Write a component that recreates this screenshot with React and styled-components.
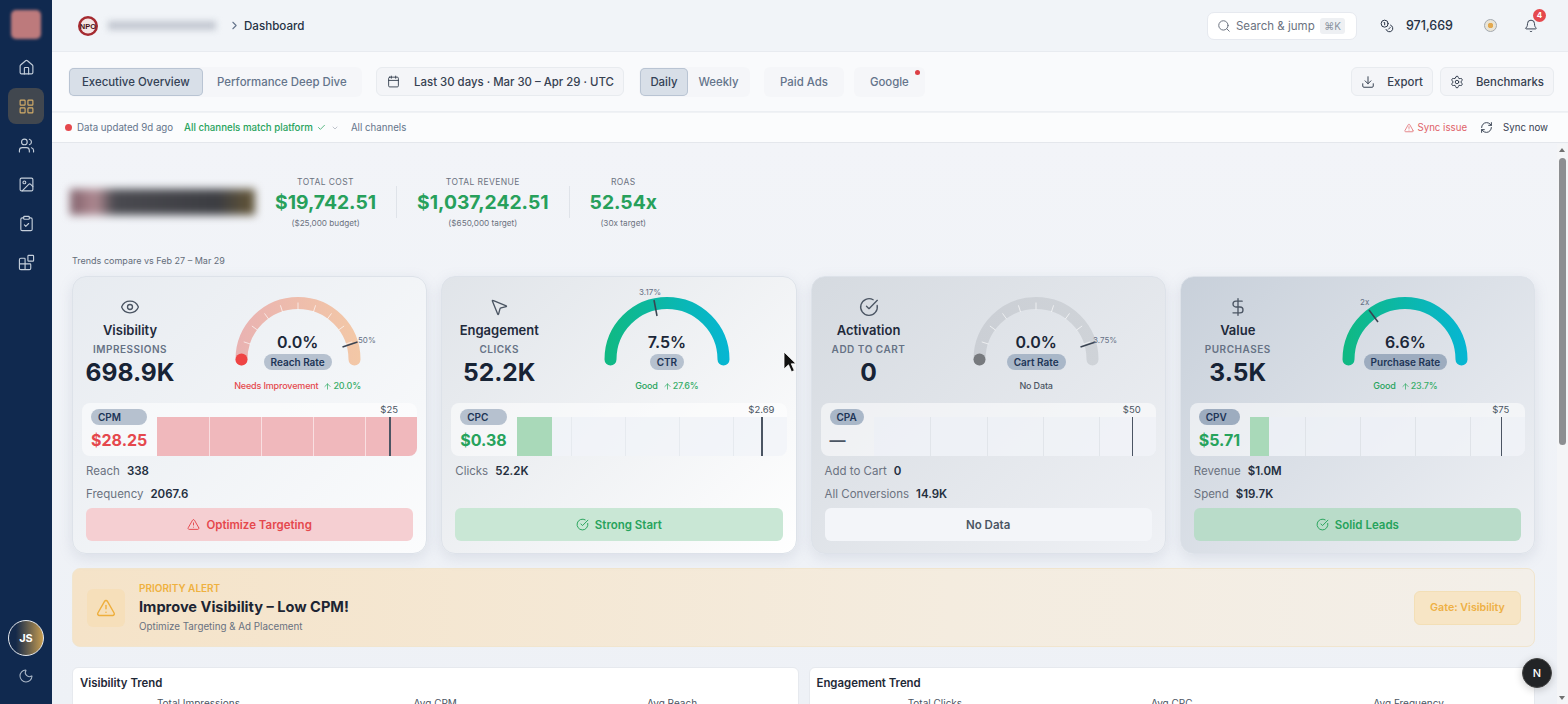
import React from 'react';
import styled, { createGlobalStyle } from 'styled-components';
import {
  House, LayoutGrid, Users, Image, ClipboardCheck, Blocks, Moon, ChevronRight, Search, Coins, Bell,
  Calendar, Download, Settings, TriangleAlert, RefreshCw, Check, ChevronDown, Eye, MousePointer2,
  CircleCheckBig, DollarSign, ArrowUp,
} from 'lucide-react';

const GlobalStyle = createGlobalStyle`
  * { box-sizing: border-box; }
  html, body { margin: 0; height: 100%; overflow: hidden; }
  body { font-family: Inter, "Liberation Sans", sans-serif; color: #1f2937; background: #f1f4f8; }
`;

const Shell = styled.div`
  display: grid;
  grid-template-columns: 52px 1fr;
  height: 100vh;
  overflow: hidden;
  position: relative;
`;

const Sidebar = styled.nav`
  background: #10294f;
  display: flex;
  flex-direction: column;
  align-items: center;
  padding-top: 10px;
  padding-bottom: 18px;
`;

const SideLogo = styled.div`
  width: 30px;
  height: 29px;
  border-radius: 5px;
  background: #bd7a7c;
  filter: blur(1.5px);
  margin-bottom: 10px;
`;

const SideItem = styled.div`
  width: 36px;
  height: 36px;
  margin-bottom: 3px;
  border-radius: 8px;
  display: flex;
  align-items: center;
  justify-content: center;
  color: ${(p) => (p.$active ? '#d4ad68' : '#c5cfdb')};
  background: ${(p) => (p.$active ? '#41474f' : 'transparent')};
`;

const SideSpacer = styled.div`
  flex: 1;
`;

const UserAvatar = styled.div`
  width: 36px;
  height: 36px;
  border-radius: 50%;
  border: 1.5px solid #e6e9ee;
  background: linear-gradient(90deg, #14294a 20%, #c69c50 100%);
  color: #fff;
  font-size: 11px;
  font-weight: 700;
  display: flex;
  align-items: center;
  justify-content: center;
  margin-bottom: 10px;
`;

const MoonButton = styled.div`
  height: 20px;
  color: #aab6c6;
  display: flex;
  align-items: center;
`;

const Main = styled.div`
  display: flex;
  flex-direction: column;
  min-width: 0;
  height: 100vh;
`;

const TopBar = styled.header`
  height: 52px;
  flex-shrink: 0;
  display: flex;
  align-items: center;
  padding: 0 30px 0 26px;
  background: #f1f4f8;
  border-bottom: 1px solid #e8ebf0;
`;

const Crumbs = styled.div`
  display: flex;
  align-items: center;
  color: #64748b;
  flex: 1;
`;

const BrandMark = styled.svg`
  width: 20px;
  height: 20px;
  margin-right: 10px;
`;

const BrandText = styled.text`
  font-family: "Liberation Sans", sans-serif;
  font-size: 7.5px;
  font-weight: 700;
  fill: #4a1216;
`;

const BlurName = styled.div`
  width: 108px;
  height: 9px;
  background: #c3c8d1;
  filter: blur(3px);
  margin-right: 12px;
`;

const CrumbText = styled.span`
  font-size: 11.6px;
  font-weight: 500;
  margin-left: 3px;
  color: #263244;
`;

const SearchBox = styled.div`
  width: 150px;
  height: 28px;
  background: #fff;
  border: 1px solid #e6e9ef;
  border-radius: 7px;
  display: flex;
  align-items: center;
  padding: 0 11px 0 9px;
  color: #6b7280;
  font-size: 11.5px;
  gap: 5px;
  white-space: nowrap;
`;

const Kbd = styled.span`
  margin-left: auto;
  background: #eef0f3;
  border-radius: 3px;
  color: #8a93a0;
  font-size: 10px;
  padding: 2px 4px;
  white-space: nowrap;
`;

const Credits = styled.div`
  display: flex;
  align-items: center;
  margin-left: 23px;
  gap: 12px;
  font-size: 12.5px;
  font-weight: 500;
  color: #263244;
`;

const StatusRing = styled.div`
  width: 13px;
  height: 13px;
  margin-left: 31px;
  border-radius: 50%;
  border: 1.5px solid #a3a8ae;
  background: radial-gradient(circle, #e3a94f 0 2.5px, #e9e4d6 3px);
`;

const BellWrap = styled.div`
  position: relative;
  margin-left: 27px;
  display: flex;
  color: #374151;
`;

const BellBadge = styled.span`
  position: absolute;
  top: -10px;
  right: -8px;
  width: 13px;
  height: 13px;
  border-radius: 50%;
  background: #e5484d;
  color: #fff;
  font-size: 8px;
  font-weight: 700;
  display: flex;
  align-items: center;
  justify-content: center;
`;

const Toolbar = styled.div`
  height: 60px;
  flex-shrink: 0;
  display: flex;
  align-items: center;
  padding: 0 14px 0 16px;
  background: #f9fafc;
  border-bottom: 1px solid #eceff3;
`;

const Group = styled.div`
  display: flex;
  align-items: center;
  height: 30px;
  padding: 1px;
  border-radius: 6px;
  background: #f5f6f9;
  margin-left: ${(p) => p.$ml || 0}px;
`;

const Tab = styled.div`
  height: 28px;
  display: flex;
  align-items: center;
  padding: 0 ${(p) => p.$pad || 15}px;
  border-radius: 5px;
  font-size: 11.4px;
  font-weight: 500;
  white-space: nowrap;
  position: relative;
  color: ${(p) => (p.$active ? '#334155' : '#64748b')};
  background: ${(p) => (p.$active ? '#d8dfe8' : 'transparent')};
  box-shadow: ${(p) => (p.$active ? 'inset 0 0 0 1px #b9c4d3' : 'none')};
`;

const NotifyDot = styled.span`
  position: absolute;
  top: 2px;
  right: 4px;
  width: 5px;
  height: 5px;
  border-radius: 50%;
  background: #dc3f45;
`;

const Boxed = styled.div`
  height: 29px;
  display: flex;
  align-items: center;
  gap: ${(p) => p.$gap || 12}px;
  padding: 0 9px 0 ${(p) => p.$pl || 9}px;
  border-radius: 6px;
  border: 1px solid #e8ebef;
  background: #f4f5f8;
  font-size: 11.4px;
  font-weight: 500;
  color: #374151;
  white-space: nowrap;
  margin-left: ${(p) => p.$ml || 0}px;
`;

const ToolSpacer = styled.div`
  flex: 1;
`;

const StatusBar = styled.div`
  height: 31px;
  flex-shrink: 0;
  display: flex;
  align-items: center;
  padding: 0 20px 0 13px;
  background: #fbfcfd;
  border-top: 1px solid #f0f2f5;
  border-bottom: 1px solid #e4e7ec;
  font-size: 9.7px;
  color: #64748b;
  white-space: nowrap;
`;

const RedDot = styled.span`
  width: 7px;
  height: 7px;
  border-radius: 50%;
  background: #e5484d;
  margin-right: 5px;
`;

const GreenNote = styled.span`
  color: #27a35c;
  font-weight: 500;
  margin-left: 11px;
  display: flex;
  align-items: center;
  gap: 4px;
`;

const Muted = styled.span`
  display: flex;
  margin-left: ${(p) => p.$ml || 0}px;
  color: #a0a8b3;
`;

const ChannelLabel = styled.span`
  margin-left: 12px;
`;

const SyncIssue = styled.span`
  margin-left: auto;
  display: flex;
  align-items: center;
  gap: 3px;
  color: #df6268;
`;

const SyncNow = styled.span`
  margin-left: 13px;
  display: flex;
  align-items: center;
  gap: 10px;
  color: #374151;
`;

const Content = styled.main`
  flex: 1;
  min-height: 0;
  overflow: hidden;
  padding: 31px 33px 0 20px;
  background: linear-gradient(180deg, #f2f4f8, #eef1f6);
`;

const Summary = styled.section`
  display: flex;
  align-items: center;
  height: 56px;
`;

const BlurLogo = styled.div`
  width: 185px;
  height: 26px;
  margin-left: -2px;
  margin-right: 20px;
  background: linear-gradient(90deg, #80606a 0, #b08a92 14%, #4a4a50 24%, #3c3d42 80%, #5e5238 96%);
  filter: blur(4px);
`;

const Kpi = styled.div`
  display: flex;
  flex-direction: column;
  align-items: center;
`;

const KpiLabel = styled.div`
  font-size: 8.5px;
  letter-spacing: 0.4px;
  color: #6b7280;
  line-height: 12px;
`;

const KpiValue = styled.div`
  font-size: 19.3px;
  font-weight: 700;
  line-height: 29px;
  color: #27a05b;
  white-space: nowrap;
`;

const KpiNote = styled.div`
  font-size: 8.2px;
  color: #6b7280;
  line-height: 12px;
`;

const KpiRule = styled.div`
  width: 1px;
  height: 32px;
  background: #dfe3e9;
  margin: 0 20px;
`;

const CompareNote = styled.div`
  font-size: 9px;
  color: #646d7a;
  line-height: 12px;
  margin-top: 25px;
`;

const Cards = styled.section`
  display: grid;
  grid-template-columns: repeat(4, 1fr);
  gap: 14px;
  margin-top: 9px;
`;

const Card = styled.article`
  height: 278px;
  padding: 20px 13px 12px;
  border: 1px solid #dde2e9;
  border-radius: 14px;
  background: linear-gradient(135deg, ${(p) => p.$from}, ${(p) => p.$to});
  box-shadow: 0 4px 14px rgba(120, 135, 160, 0.18);
  display: flex;
  flex-direction: column;
`;

const CardTop = styled.div`
  display: flex;
  height: 96px;
  gap: 8px;
`;

const Lead = styled.div`
  width: 88px;
  flex-shrink: 0;
  display: flex;
  flex-direction: column;
  align-items: center;
  white-space: nowrap;
  color: #4b5563;
`;

const LeadTitle = styled.div`
  font-size: 13px;
  font-weight: 600;
  line-height: 18px;
  margin-top: 4px;
  color: #1f2a3b;
`;

const LeadSub = styled.div`
  font-size: 10px;
  font-weight: 600;
  letter-spacing: 0.5px;
  line-height: 13px;
  margin-top: 4px;
  color: #667285;
`;

const LeadValue = styled.div`
  font-size: 24.6px;
  font-weight: 700;
  line-height: 28px;
  margin-top: 2px;
  color: #172335;
`;

const GaugeArea = styled.div`
  flex: 1;
  display: flex;
  justify-content: center;
`;

const GaugeBox = styled.div`
  position: relative;
  width: 150px;
  padding-top: 35px;
  display: flex;
  flex-direction: column;
  align-items: center;
  white-space: nowrap;
`;

const GaugeSvg = styled.svg`
  position: absolute;
  top: 0;
  left: 0;
  overflow: visible;
`;

const GaugeLabel = styled.text`
  font-family: Inter, "Liberation Sans", sans-serif;
  font-size: 8px;
  fill: #667085;
`;

const GaugeValue = styled.div`
  position: relative;
  font-size: 16px;
  font-weight: 600;
  line-height: 20px;
  color: #1b2738;
`;

const Pill = styled.span`
  display: inline-block;
  height: 16px;
  line-height: 16px;
  padding: 0 7px;
  border-radius: 8px;
  background: ${(p) => p.$bg || '#b6c1cf'};
  color: #1d3557;
  font-size: 10px;
  font-weight: 600;
  white-space: nowrap;
  text-align: center;
`;

const GaugePill = styled(Pill)`
  position: relative;
  margin-top: 2px;
`;

const MetricPill = styled(Pill)`
  text-align: left;
`;

const GaugeStatus = styled.div`
  margin-top: 10px;
  height: 12px;
  line-height: 12px;
  font-size: 9px;
  font-weight: 500;
  letter-spacing: -0.15px;
  color: ${(p) => p.$color};
  display: flex;
  align-items: center;
  gap: 5px;
`;

const Delta = styled.span`
  display: flex;
  align-items: center;
  gap: 1px;
  color: #36ad68;
  font-size: 9px;
  font-weight: 500;
`;

const MetricBar = styled.div`
  height: 53px;
  margin: 10px -4px 0 -4px;
  border-radius: 8px;
  background: rgba(255, 255, 255, 0.55);
  display: flex;
  position: relative;
`;

const MetricLead = styled.div`
  padding: 6px 10px 0 9px;
  display: flex;
  flex-direction: column;
  align-items: stretch;
  white-space: nowrap;
`;

const MetricValue = styled.div`
  font-size: 16px;
  font-weight: 700;
  line-height: 20px;
  margin-top: 5px;
  color: ${(p) => p.$color};
`;

const Track = styled.div`
  flex: 1;
  position: relative;
  margin-top: 14px;
  background: rgba(235, 239, 245, 0.55);
  border-radius: 0 0 8px 0;
`;

const TrackFill = styled.div`
  position: absolute;
  top: 0;
  bottom: 0;
  left: 0;
  background: ${(p) => p.$color};
  border-radius: 0 0 ${(p) => (p.$full ? 8 : 0)}px 0;
`;

const TrackDivider = styled.div`
  position: absolute;
  top: 0;
  bottom: 0;
  width: 1px;
  background: ${(p) => p.$line};
`;

const TargetLine = styled.div`
  position: absolute;
  top: 0;
  bottom: 0;
  width: 1.5px;
  background: #4b5563;
`;

const TargetLabel = styled.span`
  position: absolute;
  top: -13px;
  transform: translateX(-50%);
  font-size: 9.5px;
  line-height: 12px;
  color: #4b5563;
`;

const Stats = styled.div`
  height: 46px;
  margin-top: 3px;
  font-size: 11.5px;
`;

const StatRow = styled.div`
  height: 23px;
  display: flex;
  align-items: center;
  gap: 7px;
  color: #6b7280;
`;

const StatValue = styled.b`
  font-weight: 600;
  color: #242f40;
`;

const CardAction = styled.div`
  height: 33px;
  margin-top: 3px;
  border-radius: 6px;
  background: ${(p) => p.$bg};
  color: ${(p) => p.$color};
  font-size: 11.5px;
  font-weight: 600;
  display: flex;
  align-items: center;
  justify-content: center;
  gap: 6px;
`;

const Alert = styled.section`
  height: 79px;
  margin-top: 14px;
  padding: 0 13px 0 14px;
  border: 1px solid #f1e5ce;
  border-radius: 8px;
  background: linear-gradient(90deg, #f5e3c8, #f4ecdf 60%, #f3efe9);
  display: flex;
  align-items: center;
`;

const AlertIcon = styled.div`
  width: 38px;
  height: 38px;
  border-radius: 6px;
  background: #f6dfba;
  color: #eeae3c;
  display: flex;
  align-items: center;
  justify-content: center;
  margin-right: 14px;
`;

const AlertBody = styled.div`
  flex: 1;
`;

const AlertKicker = styled.div`
  font-size: 10px;
  font-weight: 600;
  line-height: 12px;
  color: #efb13f;
`;

const AlertTitle = styled.div`
  font-size: 14.6px;
  font-weight: 700;
  line-height: 20px;
  margin-top: 3px;
  color: #1d2533;
`;

const AlertNote = styled.div`
  font-size: 9.8px;
  line-height: 12px;
  margin-top: 4px;
  color: #697180;
`;

const GateBadge = styled.div`
  width: 107px;
  height: 34px;
  border: 1px solid #f3dfb6;
  border-radius: 6px;
  background: #f7e5c5;
  color: #eeb044;
  font-size: 10.7px;
  font-weight: 600;
  display: flex;
  align-items: center;
  justify-content: center;
`;

const Trends = styled.section`
  display: grid;
  grid-template-columns: 1fr 1fr;
  gap: 10px;
  margin-top: 20px;
`;

const TrendPanel = styled.div`
  height: 200px;
  background: #fff;
  border: 1px solid #e6e9ee;
  border-radius: 6px;
  padding: 7px 7px;
`;

const TrendTitle = styled.div`
  font-size: 11.4px;
  font-weight: 600;
  line-height: 16px;
  color: #1f2937;
`;

const TrendLegend = styled.div`
  display: grid;
  grid-template-columns: repeat(3, 1fr);
  margin-top: 6px;
  font-size: 10px;
  text-align: center;
  color: #4b5563;
`;

const ScrollTrack = styled.div`
  position: absolute;
  top: 144px;
  right: 0;
  bottom: 0;
  width: 11px;
  background: #f4f5f7;
`;

const ScrollThumb = styled.div`
  position: absolute;
  top: 14px;
  left: 2px;
  width: 7px;
  height: 287px;
  border-radius: 4px;
  background: #8c8e91;
`;

const ScrollArrow = styled.div`
  position: absolute;
  left: 2px;
  width: 0;
  height: 0;
  border-left: 3.5px solid transparent;
  border-right: 3.5px solid transparent;
  ${(p) => (p.$down ? 'bottom: 4px; border-top: 4px solid #707070;' : 'top: 4px; border-bottom: 4px solid #707070;')}
`;

const DevBadge = styled.div`
  position: absolute;
  left: 1522px;
  top: 658px;
  width: 30px;
  height: 30px;
  border-radius: 50%;
  background: #222426;
  border: 1px solid #444;
  color: #fff;
  font-size: 11px;
  font-weight: 500;
  display: flex;
  align-items: center;
  justify-content: center;
  box-shadow: 0 2px 8px rgba(0, 0, 0, 0.2);
`;

const Pointer = styled.svg`
  position: absolute;
  left: 783px;
  top: 351px;
`;

const cards = [
  {
    icon: Eye, title: 'Visibility', sub: 'Impressions', value: '698.9K', from: '#e7ebf0', to: '#fbfcfd',
    gauge: { from: '#e9b2b2', to: '#f3c8a6', dot: '#ef4444', segmented: true, tick: [119.5, 50, 134.5, 45], label: '50%', lx: 135, ly: 46 },
    rate: '0.0%', rateName: 'Reach Rate', status: 'Needs Improvement', statusColor: '#e5484d', delta: '20.0%',
    metric: 'CPM', amount: '$28.25', amountColor: '#e5484d', fill: 100, fillColor: '#f0b8bc', line: '#f9dfe1', target: 89.2, targetLabel: '$25',
    stats: [['Reach', '338'], ['Frequency', '2067.6']],
    action: 'Optimize Targeting', actionIcon: TriangleAlert, actionBg: '#f5cfd2', actionColor: '#e5484d',
  },
  {
    icon: MousePointer2, title: 'Engagement', sub: 'Clicks', value: '52.2K', from: '#e0e4e9', to: '#ffffff',
    gauge: { from: '#10b981', to: '#06b6d4', tick: [62, 3, 65, 19], label: '3.17%', lx: 47, ly: -2 },
    rate: '7.5%', rateName: 'CTR', status: 'Good', statusColor: '#27a35c', delta: '27.6%',
    metric: 'CPC', amount: '$0.38', amountColor: '#27a35c', fill: 13, fillColor: '#a9d9b9', line: '#e6eaef', target: 90.7, targetLabel: '$2.69',
    stats: [['Clicks', '52.2K']],
    action: 'Strong Start', actionIcon: CircleCheckBig, actionBg: '#c9e7d5', actionColor: '#27a35c',
  },
  {
    icon: CircleCheckBig, title: 'Activation', sub: 'Add to Cart', value: '0', from: '#d5dae0', to: '#eff1f5',
    gauge: { from: '#cbcfd5', to: '#cfd3d8', dot: '#777a7e', segmented: true, tick: [119.5, 50, 134.5, 45], label: '3.75%', lx: 132, ly: 46 },
    rate: '0.0%', rateName: 'Cart Rate', pillBg: '#a9b7c8', status: 'No Data', statusColor: '#4b5563',
    metric: 'CPA', amount: '—', amountColor: '#4b5563', fill: 0, fillColor: 'transparent', line: '#e1e5ea', target: 91.5, targetLabel: '$50',
    stats: [['Add to Cart', '0'], ['All Conversions', '14.9K']],
    action: 'No Data', actionBg: '#f3f5f9', actionColor: '#4b5563',
  },
  {
    icon: DollarSign, title: 'Value', sub: 'Purchases', value: '3.5K', from: '#c8d0da', to: '#eff1f5',
    gauge: { from: '#10b981', to: '#06b6d4', tick: [39, 13, 48, 25], label: '2x', lx: 30, ly: 8 },
    rate: '6.6%', rateName: 'Purchase Rate', pillBg: '#9dacbf', status: 'Good', statusColor: '#27a35c', delta: '23.7%',
    metric: 'CPV', amount: '$5.71', amountColor: '#27a35c', fill: 7, fillColor: '#a9d9b9', line: '#dfe3e8', target: 91.2, targetLabel: '$75',
    stats: [['Revenue', '$1.0M'], ['Spend', '$19.7K']],
    action: 'Solid Leads', actionIcon: CircleCheckBig, actionBg: '#b9dcc9', actionColor: '#27a35c',
  },
];

const Gauge = ({ id, gauge }) => {
  const ticks = [];
  if (gauge.segmented) {
    for (let a = 18; a < 180; a += 18) {
      const rad = (a * Math.PI) / 180;
      ticks.push(
        <line
          key={a}
          x1={75 - 50 * Math.cos(rad)}
          y1={62.5 - 50 * Math.sin(rad)}
          x2={75 - 57 * Math.cos(rad)}
          y2={62.5 - 57 * Math.sin(rad)}
          stroke="#ffffff"
          strokeOpacity="0.65"
          strokeWidth="1"
        />
      );
    }
  }
  return (
    <GaugeSvg width="150" height="96" viewBox="0 0 150 96">
      <defs>
        <linearGradient id={id} gradientUnits="userSpaceOnUse" x1="12" y1="0" x2="138" y2="0">
          <stop offset="0" stopColor={gauge.from} />
          <stop offset="1" stopColor={gauge.to} />
        </linearGradient>
      </defs>
      <path d="M18.5 62.5 A56.5 56.5 0 0 1 131.5 62.5" fill="none" stroke={`url(#${id})`} strokeWidth="12" strokeLinecap="round" />
      {ticks}
      {gauge.dot && <circle cx="18.5" cy="62.5" r="6" fill={gauge.dot} />}
      <line x1={gauge.tick[0]} y1={gauge.tick[1]} x2={gauge.tick[2]} y2={gauge.tick[3]} stroke="#3a4452" strokeWidth="1.5" />
      <GaugeLabel x={gauge.lx} y={gauge.ly}>{gauge.label}</GaugeLabel>
    </GaugeSvg>
  );
};

const KpiCard = ({ card, index }) => {
  const LeadIcon = card.icon;
  const ActionIcon = card.actionIcon;
  return (
    <Card $from={card.from} $to={card.to}>
      <CardTop>
        <Lead>
          <LeadIcon size={20} strokeWidth={1.6} />
          <LeadTitle>{card.title}</LeadTitle>
          <LeadSub>{card.sub.toUpperCase()}</LeadSub>
          <LeadValue>{card.value}</LeadValue>
        </Lead>
        <GaugeArea>
          <GaugeBox>
            <Gauge id={`gauge-${index}`} gauge={card.gauge} />
            <GaugeValue>{card.rate}</GaugeValue>
            <GaugePill $bg={card.pillBg}>{card.rateName}</GaugePill>
            <GaugeStatus $color={card.statusColor}>
              {card.status}
              {card.delta && (
                <Delta>
                  <ArrowUp size={9} />
                  {card.delta}
                </Delta>
              )}
            </GaugeStatus>
          </GaugeBox>
        </GaugeArea>
      </CardTop>
      <MetricBar>
        <MetricLead>
          <MetricPill $bg={card.pillBg}>{card.metric}</MetricPill>
          <MetricValue $color={card.amountColor}>{card.amount}</MetricValue>
        </MetricLead>
        <Track>
          <TrackFill $color={card.fillColor} $full={card.fill === 100} style={{ width: `${card.fill}%` }} />
          {[20, 40, 60, 80].map((p) => (
            <TrackDivider key={p} $line={card.line} style={{ left: `${p}%` }} />
          ))}
          <TargetLine style={{ left: `${card.target}%` }} />
          <TargetLabel style={{ left: `${card.target}%` }}>{card.targetLabel}</TargetLabel>
        </Track>
      </MetricBar>
      <Stats>
        {card.stats.map(([name, val]) => (
          <StatRow key={name}>
            {name}
            <StatValue>{val}</StatValue>
          </StatRow>
        ))}
      </Stats>
      <CardAction $bg={card.actionBg} $color={card.actionColor}>
        {ActionIcon && <ActionIcon size={13} strokeWidth={1.8} />}
        {card.action}
      </CardAction>
    </Card>
  );
};

export default function App() {
  return (
    <>
      <GlobalStyle />
      <Shell>
        <Sidebar>
          <SideLogo />
          <SideItem><House size={17} strokeWidth={1.6} /></SideItem>
          <SideItem $active><LayoutGrid size={17} strokeWidth={1.6} /></SideItem>
          <SideItem><Users size={17} strokeWidth={1.6} /></SideItem>
          <SideItem><Image size={17} strokeWidth={1.6} /></SideItem>
          <SideItem><ClipboardCheck size={17} strokeWidth={1.6} /></SideItem>
          <SideItem><Blocks size={17} strokeWidth={1.6} /></SideItem>
          <SideSpacer />
          <UserAvatar>JS</UserAvatar>
          <MoonButton><Moon size={16} strokeWidth={1.6} /></MoonButton>
        </Sidebar>
        <Main>
          <TopBar>
            <Crumbs>
              <BrandMark viewBox="0 0 20 20">
                <circle cx="10" cy="10" r="10" fill="#a52a30" />
                <circle cx="10" cy="10" r="7.5" fill="#f4e6e6" />
                <BrandText x="10" y="12.6" textAnchor="middle">NPO</BrandText>
              </BrandMark>
              <BlurName />
              <ChevronRight size={13} />
              <CrumbText>Dashboard</CrumbText>
            </Crumbs>
            <SearchBox>
              <Search size={14} strokeWidth={1.7} />
              Search &amp; jump
              <Kbd>⌘K</Kbd>
            </SearchBox>
            <Credits>
              <Coins size={14} strokeWidth={1.7} />
              971,669
            </Credits>
            <StatusRing />
            <BellWrap>
              <Bell size={14} strokeWidth={1.7} />
              <BellBadge>4</BellBadge>
            </BellWrap>
          </TopBar>
          <Toolbar>
            <Group>
              <Tab $active $pad={13}>Executive Overview</Tab>
              <Tab $pad={14.5}>Performance Deep Dive</Tab>
            </Group>
            <Boxed $ml={14} $gap={14} $pl={10}>
              <Calendar size={13} strokeWidth={1.7} />
              Last 30 days · Mar 30 – Apr 29 · UTC
            </Boxed>
            <Group $ml={15}>
              <Tab $active $pad={10.5}>Daily</Tab>
              <Tab $pad={10.5}>Weekly</Tab>
            </Group>
            <Group $ml={14}>
              <Tab>Paid Ads</Tab>
            </Group>
            <Group $ml={10}>
              <Tab>
                Google
                <NotifyDot />
              </Tab>
            </Group>
            <ToolSpacer />
            <Boxed>
              <Download size={14} strokeWidth={1.7} />
              Export
            </Boxed>
            <Boxed $ml={7}>
              <Settings size={14} strokeWidth={1.7} />
              Benchmarks
            </Boxed>
          </Toolbar>
          <StatusBar>
            <RedDot />
            Data updated 9d ago
            <GreenNote>
              All channels match platform
              <Check size={9} strokeWidth={2} />
            </GreenNote>
            <Muted $ml={5}><ChevronDown size={8} /></Muted>
            <ChannelLabel>All channels</ChannelLabel>
            <SyncIssue>
              <TriangleAlert size={10} strokeWidth={1.8} />
              Sync issue
            </SyncIssue>
            <SyncNow>
              <RefreshCw size={13} strokeWidth={1.8} />
              Sync now
            </SyncNow>
          </StatusBar>
          <Content>
            <Summary>
              <BlurLogo />
              <Kpi>
                <KpiLabel>TOTAL COST</KpiLabel>
                <KpiValue>$19,742.51</KpiValue>
                <KpiNote>($25,000 budget)</KpiNote>
              </Kpi>
              <KpiRule />
              <Kpi>
                <KpiLabel>TOTAL REVENUE</KpiLabel>
                <KpiValue>$1,037,242.51</KpiValue>
                <KpiNote>($650,000 target)</KpiNote>
              </Kpi>
              <KpiRule />
              <Kpi>
                <KpiLabel>ROAS</KpiLabel>
                <KpiValue>52.54x</KpiValue>
                <KpiNote>(30x target)</KpiNote>
              </Kpi>
            </Summary>
            <CompareNote>Trends compare vs Feb 27 – Mar 29</CompareNote>
            <Cards>
              {cards.map((card, i) => (
                <KpiCard key={card.title} card={card} index={i} />
              ))}
            </Cards>
            <Alert>
              <AlertIcon><TriangleAlert size={20} strokeWidth={1.7} /></AlertIcon>
              <AlertBody>
                <AlertKicker>PRIORITY ALERT</AlertKicker>
                <AlertTitle>Improve Visibility – Low CPM!</AlertTitle>
                <AlertNote>Optimize Targeting &amp; Ad Placement</AlertNote>
              </AlertBody>
              <GateBadge>Gate: Visibility</GateBadge>
            </Alert>
            <Trends>
              <TrendPanel>
                <TrendTitle>Visibility Trend</TrendTitle>
                <TrendLegend>
                  <span>Total Impressions</span>
                  <span>Avg CPM</span>
                  <span>Avg Reach</span>
                </TrendLegend>
              </TrendPanel>
              <TrendPanel>
                <TrendTitle>Engagement Trend</TrendTitle>
                <TrendLegend>
                  <span>Total Clicks</span>
                  <span>Avg CPC</span>
                  <span>Avg Frequency</span>
                </TrendLegend>
              </TrendPanel>
            </Trends>
          </Content>
        </Main>
        <ScrollTrack>
          <ScrollArrow />
          <ScrollThumb />
          <ScrollArrow $down />
        </ScrollTrack>
        <DevBadge>N</DevBadge>
        <Pointer width="14" height="22" viewBox="0 0 14 22">
          <path d="M1 1v17l4.5-4.2 3 7 2.8-1.2-3-6.8H13z" fill="#111" stroke="#fff" strokeWidth="0.8" />
        </Pointer>
      </Shell>
    </>
  );
}
